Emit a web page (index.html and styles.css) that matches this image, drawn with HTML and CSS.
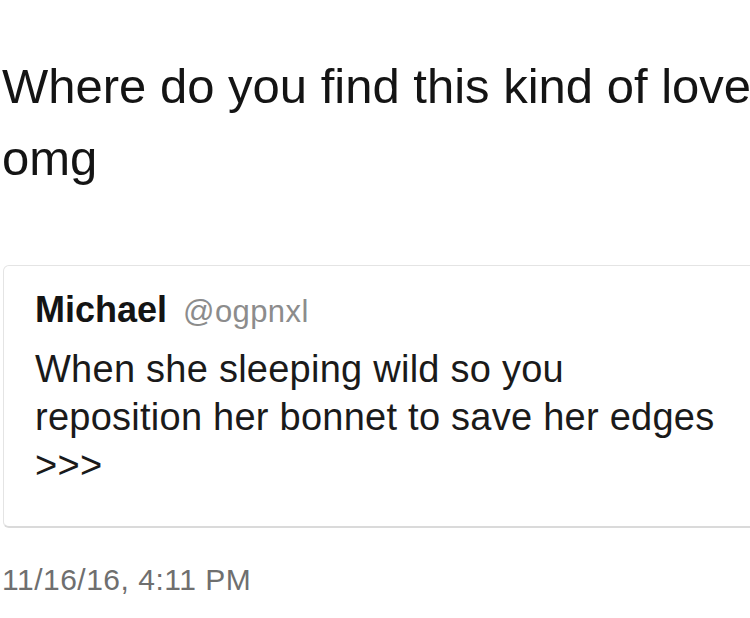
FILE: index.html
```html
<!DOCTYPE html>
<html>
<head>
<meta charset="utf-8">
<link rel="stylesheet" href="styles.css">
</head>
<body>
<div class="page">
  <p class="tweet-text">Where do you find this kind of love<br>omg</p>
  <div class="quote">
    <div class="quote-head"><span class="name">Michael</span><span class="handle">@ogpnxl</span></div>
    <p class="quote-text">When she sleeping wild so you<br>reposition her bonnet to save her edges<br>&gt;&gt;&gt;</p>
  </div>
  <div class="time">11/16/16, 4:11 PM</div>
</div>
</body>
</html>
```
FILE: styles.css
```css
html, body {
  margin: 0;
  padding: 0;
  background: #ffffff;
  overflow: hidden;
}
.page {
  width: 750px;
  height: 618px;
  overflow: hidden;
  padding-top: 50px;
  box-sizing: border-box;
  font-family: "Liberation Sans", Arial, sans-serif;
  color: #161616;
}
.tweet-text {
  margin: 0 0 0 2px;
  font-size: 49px;
  line-height: 72px;
  white-space: nowrap;
  color: #141414;
}
.quote {
  margin: 71px 0 0 3px;
  width: 820px;
  border: 1px solid #e4e4e4;
  border-bottom: 2px solid #dadada;
  border-radius: 6px;
  padding: 20px 0 37px 31px;
  box-sizing: border-box;
}
.quote-head {
  font-size: 35px;
  line-height: 48px;
  white-space: nowrap;
}
.name {
  font-size: 36px;
  font-weight: bold;
  color: #141414;
}
.handle {
  font-size: 31px;
  line-height: 1;
  letter-spacing: 0.4px;
  color: #8c8c8c;
  margin-left: 16px;
}
.quote-text {
  margin: 11px 0 0 0;
  font-size: 38px;
  line-height: 48px;
  letter-spacing: 0.25px;
  white-space: nowrap;
  color: #1a1a1a;
}
.time {
  margin: 34px 0 0 2px;
  font-size: 30px;
  line-height: 36px;
  letter-spacing: 0.5px;
  color: #6f6f6f;
}
```
